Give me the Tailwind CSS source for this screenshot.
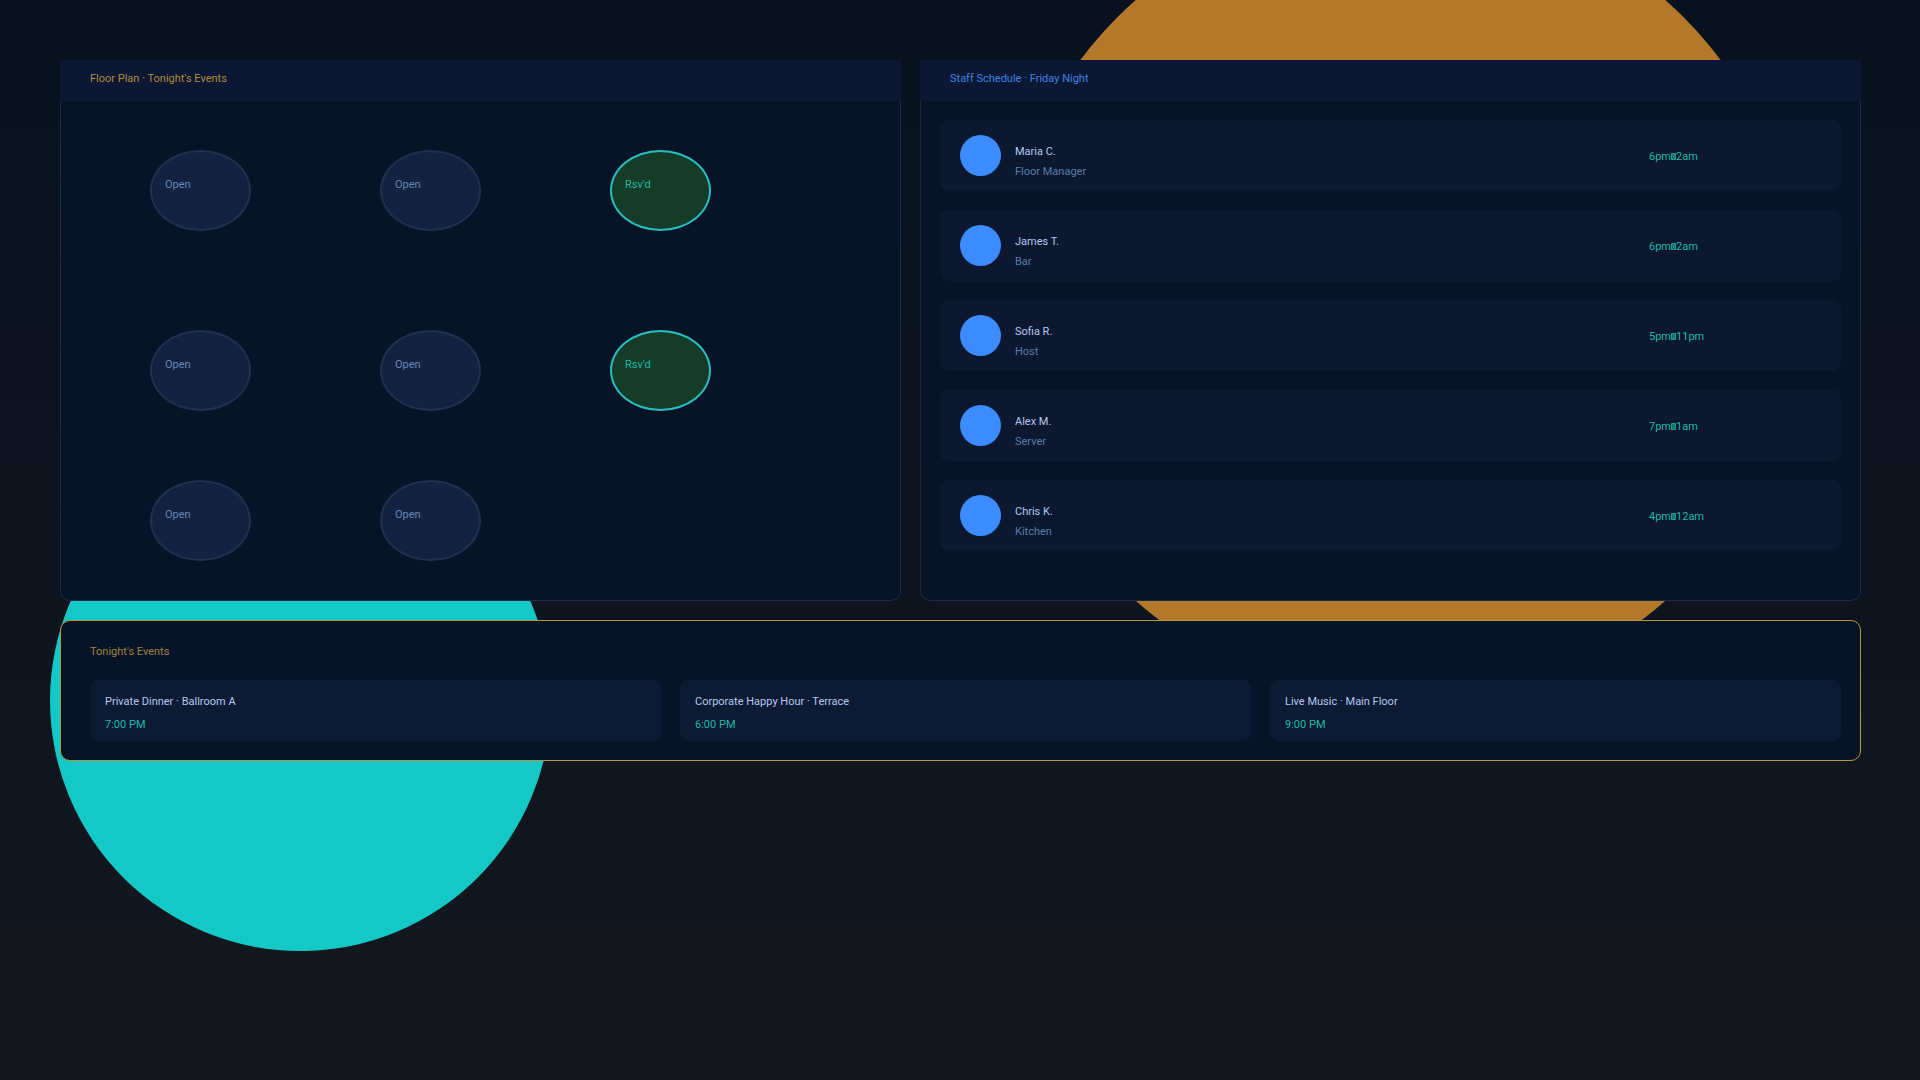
<!DOCTYPE html>
<html lang="en">
<head>
<meta charset="utf-8">
<title>Venue Operations</title>
<script src="https://cdn.jsdelivr.net/npm/@tailwindcss/browser@4"></script>
</head>
<body class="relative min-h-screen overflow-x-hidden bg-linear-to-b from-[#07111f] to-[#14171e] font-[Roboto,sans-serif] text-[11px] leading-4 text-[#b4c8f0]">
  <!-- Decorative discs behind the panels -->
  <div class="pointer-events-none absolute inset-0 overflow-hidden" aria-hidden="true">
    <div class="absolute left-[1000px] -top-[100px] size-[801px] rounded-full bg-[#b4782a]"></div>
    <div class="absolute left-[50px] top-[450px] size-[501px] rounded-full bg-[#14c8c6]"></div>
  </div>

  <main class="relative flex flex-col gap-[19px] pl-[60px] pr-[59px] pt-[60px] pb-[60px]">
    <div class="grid grid-cols-[841fr_941fr] gap-[19px]">
      <section class="flex flex-col rounded-b-[10px] bg-[#071326]">
        <h1 class="h-[41px] bg-[#0b1733] px-[30px] pt-[11px] text-[#b08c3c]">Floor Plan · Tonight's Events</h1>
        <div class="relative h-[500px] rounded-b-[10px] border border-t-0 border-[#1c2c46]">
          <button class="absolute left-[89px] top-[49px] h-[81px] w-[101px] rounded-[50%] border-2 border-[#20304f] bg-[#142241] px-[13px] pb-[11px] text-left text-[#6488b4]">Open</button>
          <button class="absolute left-[319px] top-[49px] h-[81px] w-[101px] rounded-[50%] border-2 border-[#20304f] bg-[#142241] px-[13px] pb-[11px] text-left text-[#6488b4]">Open</button>
          <button class="absolute left-[549px] top-[49px] h-[81px] w-[101px] rounded-[50%] border-2 border-[#28bebe] bg-[#143c28] px-[13px] pb-[11px] text-left text-[#1eb9a5]">Rsv'd</button>
          <button class="absolute left-[89px] top-[229px] h-[81px] w-[101px] rounded-[50%] border-2 border-[#20304f] bg-[#142241] px-[13px] pb-[11px] text-left text-[#6488b4]">Open</button>
          <button class="absolute left-[319px] top-[229px] h-[81px] w-[101px] rounded-[50%] border-2 border-[#20304f] bg-[#142241] px-[13px] pb-[11px] text-left text-[#6488b4]">Open</button>
          <button class="absolute left-[549px] top-[229px] h-[81px] w-[101px] rounded-[50%] border-2 border-[#28bebe] bg-[#143c28] px-[13px] pb-[11px] text-left text-[#1eb9a5]">Rsv'd</button>
          <button class="absolute left-[89px] top-[379px] h-[81px] w-[101px] rounded-[50%] border-2 border-[#20304f] bg-[#142241] px-[13px] pb-[11px] text-left text-[#6488b4]">Open</button>
          <button class="absolute left-[319px] top-[379px] h-[81px] w-[101px] rounded-[50%] border-2 border-[#20304f] bg-[#142241] px-[13px] pb-[11px] text-left text-[#6488b4]">Open</button>
        </div>
      </section>

      <section class="flex flex-col rounded-b-[10px] bg-[#071326]">
        <h2 class="h-[41px] bg-[#0b1733] px-[30px] pt-[11px] text-[#4182e6]">Staff Schedule · Friday Night</h2>
        <ul class="flex grow flex-col gap-[19px] rounded-b-[10px] border border-t-0 border-[#1c2c46] px-[19px] pt-[19px]">
          <li class="flex h-[71px] items-center gap-[14px] rounded-lg bg-[#0b182f] px-5">
            <span class="size-[41px] rounded-full bg-[#3c8cff]"></span>
            <div class="flex grow flex-col gap-1 pt-3"><span>Maria C.</span><span class="text-[#5a7daa]">Floor Manager</span></div>
            <div class="flex w-[172px] items-center pt-[2px] text-[#1eb9a5]"><span>6pm</span><svg class="h-[7px] w-[5px] shrink-0" viewBox="0 0 5 7" fill="none" stroke="currentColor" role="img" aria-label="to"><path d="M.5.5h4v6h-4z" fill="currentColor" fill-opacity=".35" stroke-opacity=".8"/><path d="M1 1l3 5M4 1l-3 5" stroke-width=".6"/></svg><span>2am</span></div>
          </li>
          <li class="flex h-[71px] items-center gap-[14px] rounded-lg bg-[#0b182f] px-5">
            <span class="size-[41px] rounded-full bg-[#3c8cff]"></span>
            <div class="flex grow flex-col gap-1 pt-3"><span>James T.</span><span class="text-[#5a7daa]">Bar</span></div>
            <div class="flex w-[172px] items-center pt-[2px] text-[#1eb9a5]"><span>6pm</span><svg class="h-[7px] w-[5px] shrink-0" viewBox="0 0 5 7" fill="none" stroke="currentColor" role="img" aria-label="to"><path d="M.5.5h4v6h-4z" fill="currentColor" fill-opacity=".35" stroke-opacity=".8"/><path d="M1 1l3 5M4 1l-3 5" stroke-width=".6"/></svg><span>2am</span></div>
          </li>
          <li class="flex h-[71px] items-center gap-[14px] rounded-lg bg-[#0b182f] px-5">
            <span class="size-[41px] rounded-full bg-[#3c8cff]"></span>
            <div class="flex grow flex-col gap-1 pt-3"><span>Sofia R.</span><span class="text-[#5a7daa]">Host</span></div>
            <div class="flex w-[172px] items-center pt-[2px] text-[#1eb9a5]"><span>5pm</span><svg class="h-[7px] w-[5px] shrink-0" viewBox="0 0 5 7" fill="none" stroke="currentColor" role="img" aria-label="to"><path d="M.5.5h4v6h-4z" fill="currentColor" fill-opacity=".35" stroke-opacity=".8"/><path d="M1 1l3 5M4 1l-3 5" stroke-width=".6"/></svg><span>11pm</span></div>
          </li>
          <li class="flex h-[71px] items-center gap-[14px] rounded-lg bg-[#0b182f] px-5">
            <span class="size-[41px] rounded-full bg-[#3c8cff]"></span>
            <div class="flex grow flex-col gap-1 pt-3"><span>Alex M.</span><span class="text-[#5a7daa]">Server</span></div>
            <div class="flex w-[172px] items-center pt-[2px] text-[#1eb9a5]"><span>7pm</span><svg class="h-[7px] w-[5px] shrink-0" viewBox="0 0 5 7" fill="none" stroke="currentColor" role="img" aria-label="to"><path d="M.5.5h4v6h-4z" fill="currentColor" fill-opacity=".35" stroke-opacity=".8"/><path d="M1 1l3 5M4 1l-3 5" stroke-width=".6"/></svg><span>1am</span></div>
          </li>
          <li class="flex h-[71px] items-center gap-[14px] rounded-lg bg-[#0b182f] px-5">
            <span class="size-[41px] rounded-full bg-[#3c8cff]"></span>
            <div class="flex grow flex-col gap-1 pt-3"><span>Chris K.</span><span class="text-[#5a7daa]">Kitchen</span></div>
            <div class="flex w-[172px] items-center pt-[2px] text-[#1eb9a5]"><span>4pm</span><svg class="h-[7px] w-[5px] shrink-0" viewBox="0 0 5 7" fill="none" stroke="currentColor" role="img" aria-label="to"><path d="M.5.5h4v6h-4z" fill="currentColor" fill-opacity=".35" stroke-opacity=".8"/><path d="M1 1l3 5M4 1l-3 5" stroke-width=".6"/></svg><span>12am</span></div>
          </li>
        </ul>
      </section>
    </div>

    <section class="flex flex-col gap-[20px] rounded-[10px] border border-[#b4963c] bg-[#071326] pt-[23px] pr-[19px] pb-[19px] pl-[29px]">
      <h2 class="text-[#a08240]">Tonight's Events</h2>
      <div class="grid grid-cols-3 gap-[19px]">
        <article class="flex h-[61px] flex-col gap-[7px] rounded-lg bg-[#0d1a33] px-[15px] pt-[14px]"><h3>Private Dinner · Ballroom A</h3><p class="text-[#1eb9a5]">7:00 PM</p></article>
        <article class="flex h-[61px] flex-col gap-[7px] rounded-lg bg-[#0d1a33] px-[15px] pt-[14px]"><h3>Corporate Happy Hour · Terrace</h3><p class="text-[#1eb9a5]">6:00 PM</p></article>
        <article class="flex h-[61px] flex-col gap-[7px] rounded-lg bg-[#0d1a33] px-[15px] pt-[14px]"><h3>Live Music · Main Floor</h3><p class="text-[#1eb9a5]">9:00 PM</p></article>
      </div>
    </section>
  </main>
</body>
</html>
